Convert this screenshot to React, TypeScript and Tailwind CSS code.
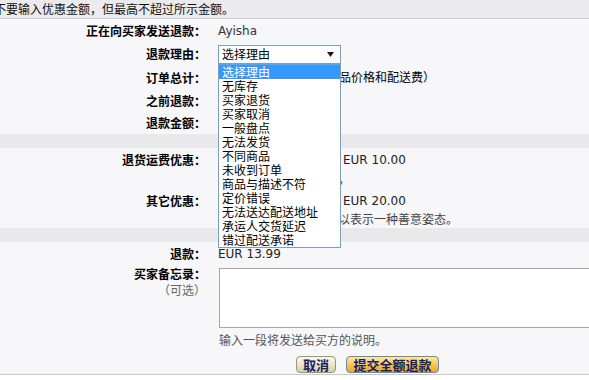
import type { ReactNode } from 'react'
import clsx from 'clsx'

const REASONS = [
  '选择理由',
  '无库存',
  '买家退货',
  '买家取消',
  '一般盘点',
  '无法发货',
  '不同商品',
  '未收到订单',
  '商品与描述不符',
  '定价错误',
  '无法送达配送地址',
  '承运人交货延迟',
  '错过配送承诺',
]

const latin = "font-['DejaVu_Sans','Noto_Sans_CJK_SC',sans-serif]"

function Row({ label, className, children }: { label?: ReactNode; className?: string; children?: ReactNode }) {
  return (
    <div className={clsx('flex items-center', className)}>
      <div className="w-[206px] shrink-0 text-right text-[12px] font-bold leading-[14px] text-black">{label}</div>
      <div className="ml-[12px] flex flex-1 items-center text-[12px] leading-[14px]">{children}</div>
    </div>
  )
}

function Band() {
  return <div className="h-[14px] bg-[#e9e8eb]" />
}

// amount box, sits under the open reason list
function AmountBox() {
  return <div className="mr-[5px] h-[18px] w-[120px] shrink-0 border border-[#a7a7a7] bg-white" />
}

export default function App() {
  return (
    <div className="h-[380px] w-[589px] overflow-hidden bg-white font-['Noto_Sans_CJK_SC',sans-serif] text-black">
      <div className="h-[19px] border-b border-[#cdcdd1] bg-[#ebeaed]">
        <div className="ml-[-6px] whitespace-nowrap pt-[2px] text-[12px] leading-[14px] text-[#111]">
          不要输入优惠金额，但最高不超过所示金额。
        </div>
      </div>

      <div className="border-b border-[#c9c9cc] bg-[#f7f6f9]">
        <Row label="正在向买家发送退款：" className="h-[24px]">
          <span className={clsx(latin, 'text-[#333344]')}>Ayisha</span>
        </Row>
        <Row label="退款理由：" className="h-[22px]">
          <div className="relative z-10 w-[123px]">
            <div className="flex h-[19px] items-center justify-between border border-[#7f9db9] bg-white pl-[3px] pr-[6px]">
              <span>选择理由</span>
              <svg width="7" height="5" viewBox="0 0 7 5">
                <path d="M0 0h7L3.5 5z" fill="#2a0a2a" />
              </svg>
            </div>
            <ul className="absolute left-0 top-[19px] w-[123px] border border-[#7f9db9] bg-white">
              {REASONS.map((r, i) => (
                <li
                  key={r}
                  className={clsx(
                    'h-[14px] whitespace-nowrap pl-[3px] leading-[14px]',
                    i === 0 ? 'bg-[#3399ff] text-white' : 'text-black'
                  )}
                >
                  {r}
                </li>
              ))}
            </ul>
          </div>
        </Row>
        <Row label="订单总计：" className="h-[25px]">
          <span className="whitespace-nowrap pl-[10px]">
            <span className={latin}>EUR 33.99</span>（包括商品价格和配送费）
          </span>
        </Row>
        <Row label="之前退款：" className="h-[22px]">
          <AmountBox />
        </Row>
        <Row label="退款金额：" className="h-[22px]">
          <AmountBox />
        </Row>

        <Band />

        <Row label="退货运费优惠：" className="h-[24px]">
          <AmountBox />
          <span className={clsx(latin, 'text-[#222]')}>EUR 10.00</span>
        </Row>
        <Row className="h-[14px]">
          <span className="whitespace-nowrap text-[#444]">退还给买家的退货运费，</span>
        </Row>
        <Row label="其它优惠：" className="mt-[4px] h-[22px]">
          <AmountBox />
          <span className={clsx(latin, 'text-[#222]')}>EUR 20.00</span>
        </Row>
        <Row className="h-[14px]">
          <span className="whitespace-nowrap text-[#444]">向买家提供额外的优惠以表示一种善意姿态。</span>
        </Row>
        <div className="h-[2px]" />

        <Band />

        <Row label="退款：" className="h-[24px]">
          <span className={clsx(latin, 'text-[#222]')}>EUR 13.99</span>
        </Row>
        <div className="flex">
          <div className="w-[206px] shrink-0 text-right text-[12px] leading-[16px]">
            <div className="font-bold">买家备忘录：</div>
            <div className="text-[#666]">（可选）</div>
          </div>
          <div className="ml-[13px] flex-1 pt-[2px]">
            <textarea className="block h-[60px] w-[380px] resize-none border border-[#a7a7a7] bg-white" />
            <div className="mt-[5px] h-[14px] whitespace-nowrap text-[12px] leading-[14px] text-[#555]">
              输入一段将发送给买方的说明。
            </div>
          </div>
        </div>
        <div className="flex h-[27px] items-start gap-[10px] pl-[296px] pt-[9px]">
          <button className="flex h-[17px] w-[40px] items-center justify-center rounded-[4px] border border-[#9c9678] bg-linear-to-b from-[#fcf9e8] to-[#d8d0a8] text-[13px] font-bold leading-none text-[#15206c]">
            取消
          </button>
          <button className="flex h-[17px] w-[93px] items-center justify-center rounded-[4px] border border-[#6f86ad] bg-linear-to-b from-[#fde9a2] via-[#f7c650] to-[#eba526] text-[13px] font-bold leading-none text-[#15206c]">
            提交全额退款
          </button>
        </div>
      </div>
    </div>
  )
}
